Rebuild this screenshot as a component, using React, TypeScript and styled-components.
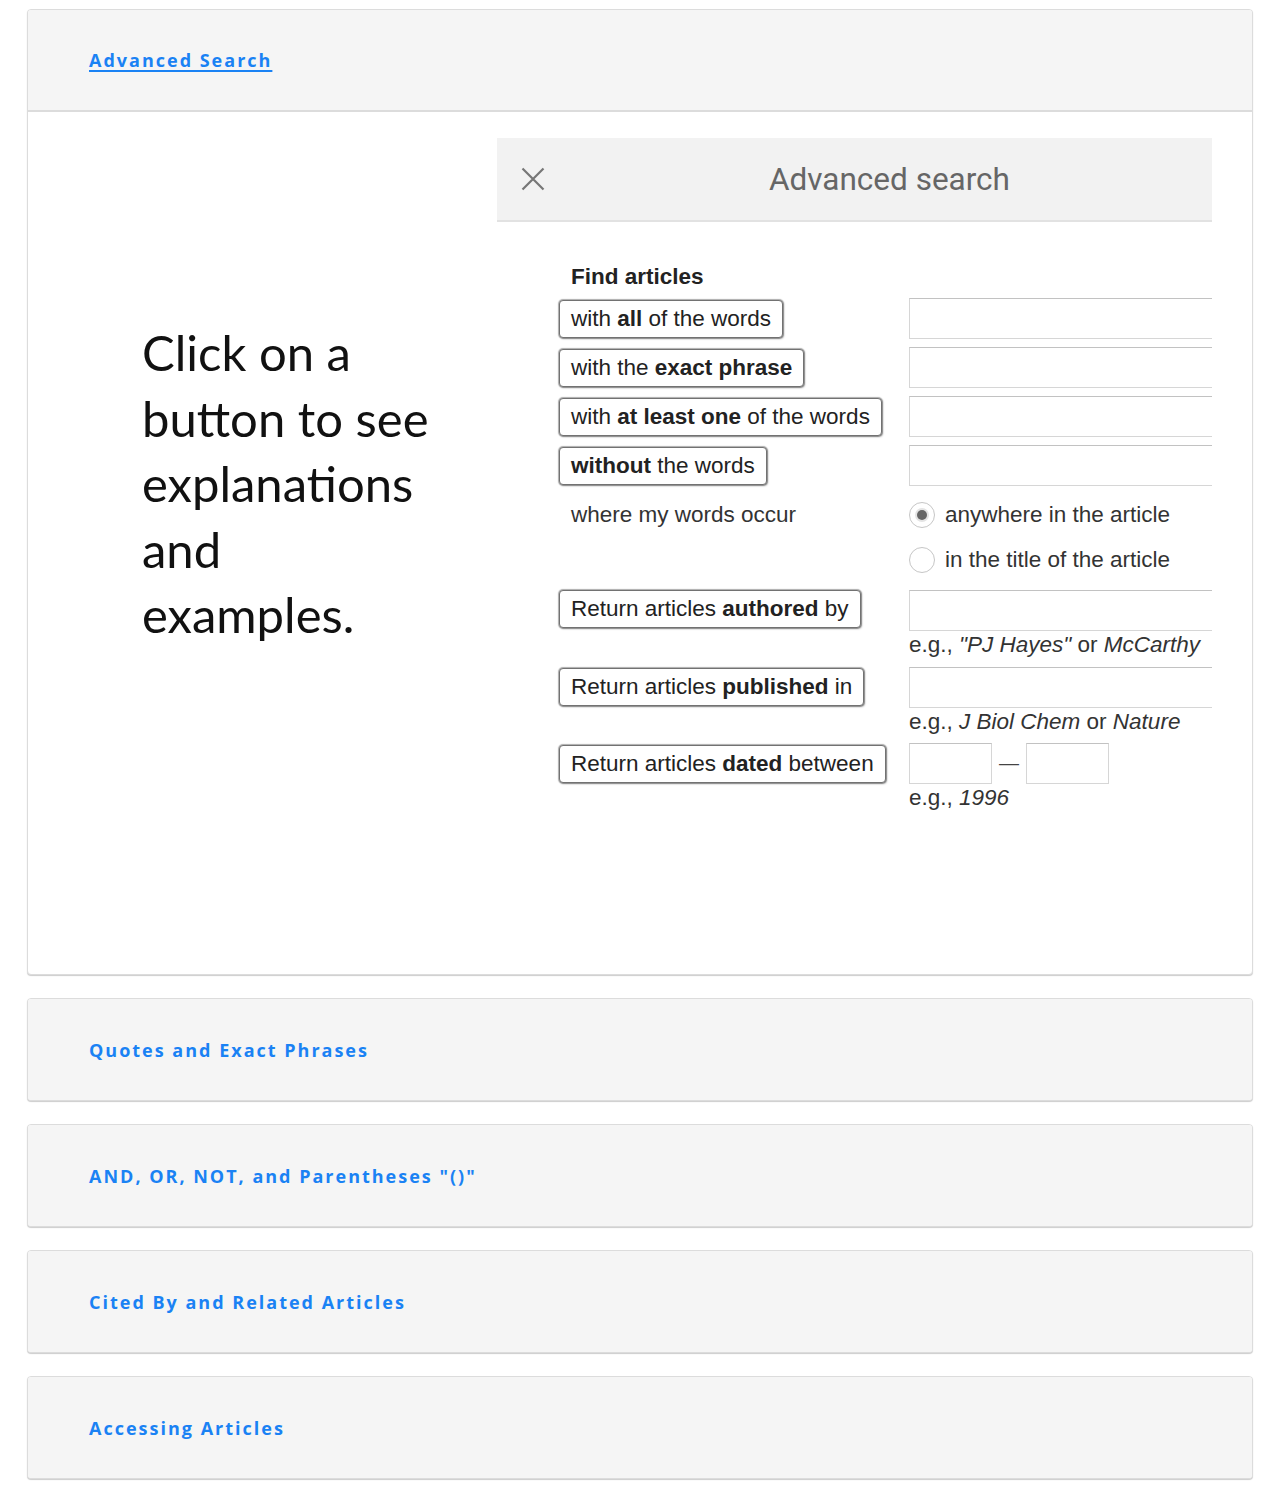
import React from "react";
import styled, {createGlobalStyle} from "styled-components";

const GlobalStyle = createGlobalStyle`
  body {
    margin: 0;
    background: #fff;
    font-family: "Open Sans", sans-serif;
  }
`;

const Page = styled.div`
  padding: 9px 25px 13px 27px;
  display: flex;
  flex-direction: column;
  gap: 23px;
`;

const Panel = styled.section`
  border: 1px solid #dcdcdc;
  border-radius: 4px;
  box-shadow: 0 1px 1px rgba(0, 0, 0, 0.2);
  overflow: hidden;
  background: #fff;
`;

const PanelHeader = styled.div<{ $open?: boolean }>`
  height: ${p => (p.$open ? 100 : 101)}px;
  display: flex;
  align-items: center;
  padding-left: 61px;
  background: #f5f5f5;
  border-bottom: ${p => (p.$open ? "2px solid #dcdcdc" : "none")};
`;

const PanelTitle = styled.a<{ $active?: boolean }>`
  font-family: "Open Sans", sans-serif;
  font-weight: 700;
  font-size: 18px;
  letter-spacing: 2px;
  color: #1a82f4;
  cursor: pointer;
  text-decoration: ${p => (p.$active ? "underline" : "none")};
  text-underline-offset: 3px;
  text-decoration-thickness: 2px;
`;

const PanelBody = styled.div`
  display: flex;
  height: 862px;
`;

const IntroColumn = styled.div`
  width: 469px;
  padding: 208px 0 0 114px;
  box-sizing: border-box;
`;

const IntroText = styled.p`
  margin: 0;
  width: 295px;
  font-family: Lato, "Noto Sans", sans-serif;
  font-size: 49px;
  line-height: 65.5px;
  color: #111;
`;

const Dialog = styled.div`
  margin-top: 26px;
  width: 715px;
  height: 700px;
  overflow: hidden;
  font-family: "Liberation Sans", Arial, sans-serif;
`;

const DialogHeader = styled.div`
  height: 82px;
  display: flex;
  align-items: center;
  padding-left: 24px;
  background: #f2f2f2;
  border-bottom: 2px solid #e2e2e2;
`;

const DialogTitle = styled.h2`
  margin: 0 0 0 224px;
  font-family: Roboto, "Liberation Sans", sans-serif;
  font-weight: 400;
  font-size: 31.5px;
  color: #666;
`;

const Form = styled.div`
  padding: 42px 0 0 62px;
  display: grid;
  grid-template-columns: 350px 1fr;
  row-gap: 8px;
  align-items: start;
`;

const FormHeading = styled.div`
  grid-column: 1 / span 2;
  padding-left: 12px;
  font-size: 22.5px;
  line-height: 26px;
  font-weight: 700;
  color: #222;
`;

const LabelButton = styled.button<{ $offset?: number }>`
  justify-self: start;
  margin-top: ${p => p.$offset ?? 2}px;
  height: 38px;
  padding: 0 11px;
  border: 1px solid #727272;
  border-radius: 4px;
  box-shadow: 0 0 1px 1px rgba(0, 0, 0, 0.32), 1px 1px 2px rgba(0, 0, 0, 0.25);
  background: #fff;
  font-family: "Liberation Sans", Arial, sans-serif;
  font-size: 22.5px;
  line-height: 36px;
  color: #222;
  white-space: nowrap;

  b {
    font-weight: 700;
  }
`;

const PlainLabel = styled.div`
  padding: 8px 0 0 12px;
  font-size: 22.5px;
  line-height: 26px;
  color: #333;
`;

const Field = styled.div<{ $offset?: number }>`
  margin-top: ${p => p.$offset ?? 0}px;
  display: flex;
  flex-direction: column;
`;

const TextInput = styled.input<{ $width?: number }>`
  width: ${p => p.$width ?? 330}px;
  height: 41px;
  box-sizing: border-box;
  border: 1px solid #d6d6d6;
  border-top-color: #c2c2c2;
  background: #fff;
  outline: none;
`;

const Hint = styled.div`
  margin-top: 1px;
  font-size: 22.5px;
  line-height: 26px;
  color: #333;
`;

const DateRange = styled.div`
  display: flex;
  align-items: center;
  gap: 7px;
`;

const Dash = styled.span`
  font-size: 20px;
  color: #444;
`;

const RadioGroup = styled.div`
  padding-top: 8px;
  display: flex;
  flex-direction: column;
  gap: 19px;
`;

const RadioOption = styled.label`
  display: flex;
  align-items: center;
  gap: 10px;
  font-size: 22.5px;
  color: #333;
`;

const RadioCircle = styled.span<{ $checked?: boolean }>`
  width: 26px;
  height: 26px;
  box-sizing: border-box;
  border-radius: 50%;
  border: 1px solid #c6c6c6;
  background: #fff;
  display: flex;
  align-items: center;
  justify-content: center;

  &::after {
    content: "";
    width: 10px;
    height: 10px;
    border-radius: 50%;
    background: ${p => (p.$checked ? "#666" : "transparent")};
    box-shadow: ${p => (p.$checked ? "0 0 0 2px #e4e4e4" : "none")};
  }
`;

const CloseIcon = () => (
  <svg width="24" height="24" viewBox="0 0 24 24" fill="none" stroke="#777" strokeWidth="2.2">
    <path d="M1.5 1.5 L22.5 22.5 M22.5 1.5 L1.5 22.5" />
  </svg>
);

const wordRows = [
  <>with <b>all</b> of the words</>,
  <>with the <b>exact phrase</b></>,
  <>with <b>at least one</b> of the words</>,
  <><b>without</b> the words</>,
];

const otherSections = [
  "Quotes and Exact Phrases",
  'AND, OR, NOT, and Parentheses "()"',
  "Cited By and Related Articles",
  "Accessing Articles",
];

const App = () => {
  return (
    <>
      <GlobalStyle/>
      <Page>
        <Panel>
          <PanelHeader $open>
            <PanelTitle $active>Advanced Search</PanelTitle>
          </PanelHeader>
          <PanelBody>
            <IntroColumn>
              <IntroText>Click on a button to see explanations and examples.</IntroText>
            </IntroColumn>
            <Dialog>
              <DialogHeader>
                <CloseIcon/>
                <DialogTitle>Advanced search</DialogTitle>
              </DialogHeader>
              <Form>
                <FormHeading>Find articles</FormHeading>
                {wordRows.map((label, index) => (
                  <React.Fragment key={index}>
                    <LabelButton>{label}</LabelButton>
                    <Field><TextInput/></Field>
                  </React.Fragment>
                ))}
                <PlainLabel>where my words occur</PlainLabel>
                <RadioGroup>
                  <RadioOption><RadioCircle $checked/>anywhere in the article</RadioOption>
                  <RadioOption><RadioCircle/>in the title of the article</RadioOption>
                </RadioGroup>

                <LabelButton $offset={9}>Return articles <b>authored</b> by</LabelButton>
                <Field $offset={9}>
                  <TextInput/>
                  <Hint>e.g., <i>"PJ Hayes"</i> or <i>McCarthy</i></Hint>
                </Field>

                <LabelButton $offset={2}>Return articles <b>published</b> in</LabelButton>
                <Field $offset={1}>
                  <TextInput/>
                  <Hint>e.g., <i>J Biol Chem</i> or <i>Nature</i></Hint>
                </Field>

                <LabelButton $offset={2}>Return articles <b>dated</b> between</LabelButton>
                <Field>
                  <DateRange>
                    <TextInput $width={83}/>
                    <Dash>—</Dash>
                    <TextInput $width={83}/>
                  </DateRange>
                  <Hint>e.g., <i>1996</i></Hint>
                </Field>
              </Form>
            </Dialog>
          </PanelBody>
        </Panel>
        {otherSections.map(title => (
          <Panel key={title}>
            <PanelHeader>
              <PanelTitle>{title}</PanelTitle>
            </PanelHeader>
          </Panel>
        ))}
      </Page>
    </>
  );
};

export default App;
